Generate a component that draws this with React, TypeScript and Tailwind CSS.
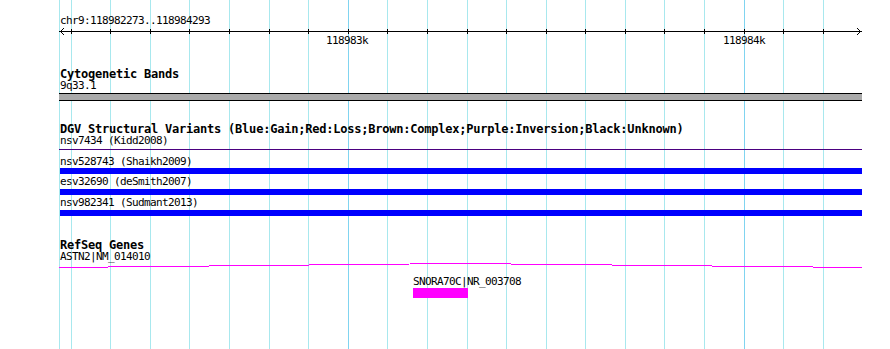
import React from "react";

const START = 118982273;
const END = 118984293;
const SCALE = 800 / (END - START + 1);
const toX = (bp: number) => Math.round(60 + (bp - START) * SCALE);

const ticks: { x: number; major: boolean }[] = [];
for (let bp = 118982300; bp <= END; bp += 100) {
  ticks.push({ x: toX(bp), major: bp % 1000 === 0 });
}

const Small = ({ children, className = "" }: { children: React.ReactNode; className?: string }) => (
  <div className={`h-[11px] text-[11px] leading-[9px] tracking-[-0.62px] text-black whitespace-nowrap pl-px ${className}`}>
    {children}
  </div>
);

const Title = ({ children }: { children: React.ReactNode }) => (
  <div className="h-[13px] text-[12px] leading-[12px] tracking-[-0.22px] font-bold text-black whitespace-nowrap pl-px">
    {children}
  </div>
);

const BlueBar = () => <div className="h-[6px] w-[802px] bg-[#0000ff] ml-px" />;

export default function App() {
  return (
    <div className="relative w-[890px] h-[349px] bg-white overflow-hidden [font-family:'DejaVu_Sans_Mono',monospace]">
      {/* grid */}
      <svg className="absolute inset-0" width={890} height={349} shapeRendering="crispEdges">
        <line x1={59.5} y1={0} x2={59.5} y2={349} stroke="#a8e8ee" strokeWidth={1} />
        {ticks.map((t) => (
          <line
            key={t.x}
            x1={t.x + 0.5}
            y1={0}
            x2={t.x + 0.5}
            y2={349}
            stroke={t.major ? "#80d4f0" : "#a8e8ee"}
            strokeWidth={1}
          />
        ))}
      </svg>

      <div className="relative ml-[59px] w-[803px] flex flex-col">
        {/* ruler */}
        <div className="h-[16px]" />
        <Small>chr9:118982273..118984293</Small>
        <svg width={803} height={9} shapeRendering="crispEdges" className="block">
          <line x1={0} y1={4.5} x2={803} y2={4.5} stroke="#000" strokeWidth={1} />
          <polyline points="5,1 1.5,4.5 5,8" fill="none" stroke="#000" strokeWidth={1} />
          <polyline points="798,1 801.5,4.5 798,8" fill="none" stroke="#000" strokeWidth={1} />
          {ticks.map((t) => (
            <line key={t.x} x1={t.x - 59 + 0.5} y1={2} x2={t.x - 59 + 0.5} y2={7} stroke="#000" strokeWidth={1} />
          ))}
        </svg>
        <div className="relative h-[11px]">
          <span className="absolute left-[267px] top-0 text-[11px] leading-[9px] tracking-[-0.62px] whitespace-nowrap">118983k</span>
          <span className="absolute left-[664px] top-0 text-[11px] leading-[9px] tracking-[-0.62px] whitespace-nowrap">118984k</span>
        </div>

        {/* Cytogenetic Bands */}
        <div className="h-[21px]" />
        <Title>Cytogenetic Bands</Title>
        <Small>9q33.1</Small>
        <div className="h-px" />
        <div className="h-[8px] w-[803px] border-y border-black bg-[#aaaaaa]" />

        {/* DGV */}
        <div className="h-[22px]" />
        <Title>DGV Structural Variants (Blue:Gain;Red:Loss;Brown:Complex;Purple:Inversion;Black:Unknown)</Title>
        <Small>nsv7434 (Kidd2008)</Small>
        <div className="h-[2px]" />
        <div className="h-px w-[803px] bg-[#4b0080]" />
        <div className="h-[7px]" />
        <Small>nsv528743 (Shaikh2009)</Small>
        <BlueBar />
        <div className="h-[3px]" />
        <Small>esv32690 (deSmith2007)</Small>
        <div className="h-px" />
        <BlueBar />
        <div className="h-[3px]" />
        <Small>nsv982341 (Sudmant2013)</Small>
        <div className="h-px" />
        <BlueBar />

        {/* RefSeq */}
        <div className="h-[23px]" />
        <Title>RefSeq Genes</Title>
        <Small>ASTN2|NM_014010</Small>
        <svg width={803} height={5} shapeRendering="crispEdges" className="block">
          <polyline points="0,4.5 401,0.5 803,4.5" fill="none" stroke="#ff00ff" strokeWidth={1} />
        </svg>
        <div className="h-[9px]" />
        <Small className="ml-[353px]">SNORA70C|NR_003708</Small>
        <div className="h-[10px] w-[55px] ml-[354px] bg-[#ff00ff]" />
      </div>
    </div>
  );
}
